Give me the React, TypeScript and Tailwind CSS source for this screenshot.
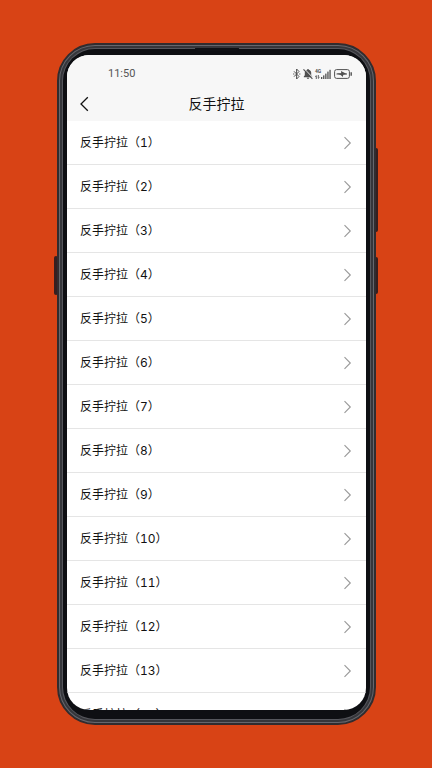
import React from 'react';

const TITLE = '反手拧拉';

const lessons = Array.from({ length: 14 }, (_, i) => i + 1);

const StatusIcons: React.FC = () => (
  <div className="flex items-center gap-[2px] text-[#505050]">
    {/* Bluetooth */}
    <svg width="8" height="12" viewBox="0 0 8 12" fill="none" stroke="currentColor" strokeWidth="1">
      <path d="M1 3.3 6 8.5 3.6 11V1L6 3.5 1 8.7" />
      <path d="M0.1 6h1.2M6.2 6h1.2" />
    </svg>
    {/* Muted bell */}
    <svg width="10" height="12" viewBox="0 0 10 12">
      <path
        d="M5 1c.6 0 .9.3.9.8 1.5.4 2.3 1.6 2.3 3v2.5l1 1.2v.7H.8v-.7l1-1.2V4.8c0-1.4.8-2.6 2.3-3C4.1 1.3 4.4 1 5 1ZM3.8 9.7h2.4c0 .7-.5 1.2-1.2 1.2s-1.2-.5-1.2-1.2Z"
        fill="currentColor"
      />
      <path d="M1.5 1 10 9.8" stroke="#f7f7f7" strokeWidth="1" />
      <path d="M.5 1.4 9.4 10.8" stroke="currentColor" strokeWidth="1.1" />
    </svg>
    {/* Mobile signal */}
    <div className="flex items-end">
      <div className="flex h-[10px] w-[6px] flex-col justify-between">
        <span className="font-['Roboto',sans-serif] text-[5px] font-bold leading-[5px]">4G</span>
        <svg width="5" height="4" viewBox="0 0 5 4" fill="none" stroke="currentColor" strokeWidth="0.9">
          <path d="M1.3 4V.6L.2 1.7M3.3 0v3.4l1.2-1.1" />
        </svg>
      </div>
      <svg width="10" height="10" viewBox="0 0 10 10" fill="currentColor">
        <rect x="0" y="8" width="1.3" height="2" />
        <rect x="2.1" y="6.4" width="1.3" height="3.6" />
        <rect x="4.2" y="4.6" width="1.3" height="5.4" />
        <rect x="6.3" y="2.6" width="1.3" height="7.4" />
        <rect x="8.4" y="0.8" width="1.3" height="9.2" />
      </svg>
    </div>
    {/* Battery */}
    <svg width="19" height="10" viewBox="0 0 19 10" className="ml-px">
      <rect x="0.6" y="0.6" width="14.8" height="8.8" rx="2" fill="none" stroke="currentColor" strokeWidth="1" />
      <path d="M2.6 4.5 7.2 4.2 7 2 12.8 5 9.2 5.8 9 7.9 6.6 5.9Z" fill="currentColor" />
      <path d="M2.5 5h10.5" stroke="currentColor" strokeWidth="1" />
      <path d="M17.2 3.2v3.6" stroke="currentColor" strokeWidth="1.4" />
    </svg>
  </div>
);

const App: React.FC = () => {
  return (
    <div className="flex h-screen bg-[#d84315] py-[43px] pl-[57px] pr-[56px] font-['Noto_Sans_CJK_SC',sans-serif]">
      <div className="relative flex min-w-0 flex-1">
        {/* Side buttons */}
        <span className="absolute -right-[2px] top-[105px] h-[84px] w-1 rounded-sm bg-[#351f20]" />
        <span className="absolute -right-[2px] top-[214px] h-[37px] w-1 rounded-sm bg-[#351f20]" />
        <span className="absolute -left-[3px] top-[213px] h-[39px] w-1 rounded-sm bg-[#351f20]" />

        {/* Phone body */}
        <div className="relative flex min-w-0 flex-1 rounded-[38px] border-2 border-[#302c2f] bg-[#65666c] p-px">
          <div className="flex min-w-0 flex-1 rounded-[35px] border-2 border-[#35363b] bg-[#55565c] p-px">
            <div className="flex min-w-0 flex-1 rounded-[32px] bg-[#0e0f13] px-1 pb-[9px] pt-[6px]">
              {/* Screen */}
              <div className="flex min-w-0 flex-1 flex-col overflow-hidden rounded-[22px] bg-white">
                <header className="bg-[#f7f7f7]">
                  <div className="flex h-[38px] items-center justify-between pl-[41px] pr-[13px]">
                    <time className="font-['Roboto',sans-serif] text-[11px] leading-4 text-[#555555]">11:50</time>
                    <StatusIcons />
                  </div>
                  <div className="grid h-7 grid-cols-[36px_1fr_36px] items-start">
                    <button type="button" aria-label="返回" className="flex h-[22px] items-center pl-3">
                      <svg width="10" height="16" viewBox="0 0 10 16" fill="none" stroke="#111111" strokeWidth="1.3">
                        <path d="M8.8 1.2 2 8l6.8 6.8" />
                      </svg>
                    </button>
                    <h1 className="text-center text-[14px] leading-5 text-[#111111]">{TITLE}</h1>
                  </div>
                </header>

                <ul className="min-h-0 flex-1 overflow-hidden">
                  {lessons.map((n) => (
                    <li key={n} className="border-b border-[#e5e5e5]">
                      <a
                        href={`#lesson-${n}`}
                        className="flex h-[43px] items-center justify-between pl-[13px] pr-[14px] text-[12px] text-[#111111]"
                      >
                        <span className="[text-spacing-trim:space-all]">
                          {TITLE}（<span className="font-['Inter',sans-serif] tabular-nums">{n}</span>）
                        </span>
                        <svg width="9" height="14" viewBox="0 0 9 14" fill="none" stroke="#999999" strokeWidth="1.1">
                          <path d="M1.5 1.2 7.3 7l-5.8 5.8" />
                        </svg>
                      </a>
                    </li>
                  ))}
                </ul>
              </div>
            </div>
          </div>
          {/* Earpiece */}
          <span className="absolute left-1/2 top-[3px] h-[3px] w-11 -translate-x-1/2 rounded-b-sm bg-[#101115]" />
        </div>
      </div>
    </div>
  );
};

export default App;
